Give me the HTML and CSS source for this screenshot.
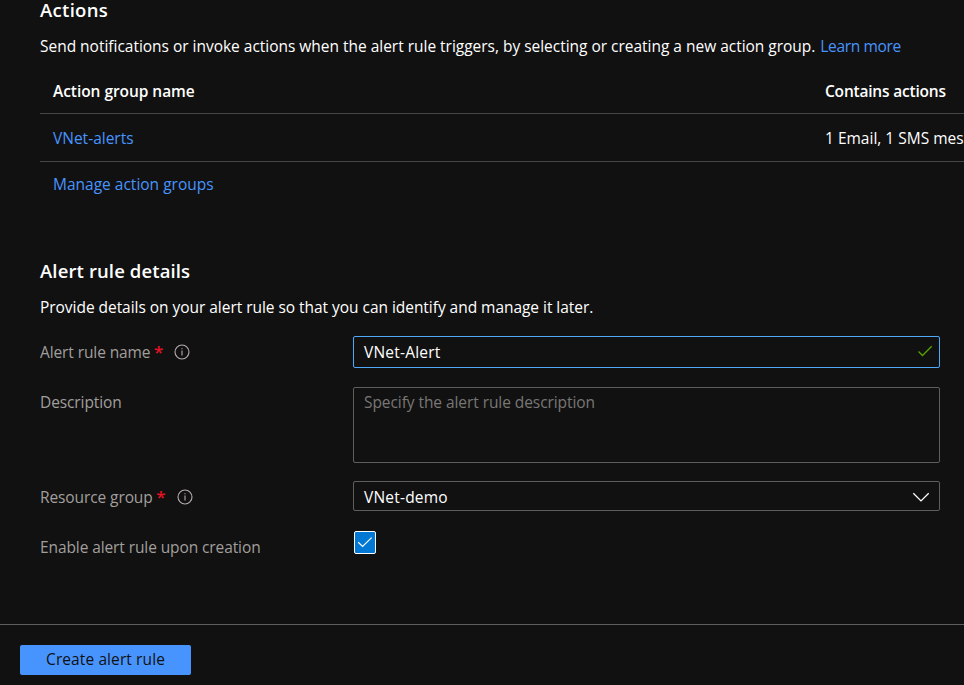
FILE: index.html
```
<!DOCTYPE html>
<html lang="en">
<head>
<meta charset="utf-8">
<title>Create alert rule</title>
<link rel="stylesheet" href="styles.css">
</head>
<body>
<main class="content">
  <section class="actions">
    <h2 class="actions-title">Actions</h2>
    <p class="intro"><span class="intro-text">Send notifications or invoke actions when the alert rule triggers, by selecting or creating a new action group.</span> <a class="link learn" href="#">Learn more</a></p>
    <div class="table">
      <div class="row head"><span class="name">Action group name</span><span class="head-contains">Contains actions</span></div>
      <div class="row"><span class="name"><a class="link" href="#">VNet-alerts</a></span><span>1 Email, 1 SMS message</span></div>
    </div>
    <div class="manage"><a class="link" href="#">Manage action groups</a></div>
  </section>
  <section class="details">
    <h2>Alert rule details</h2>
    <p class="hint">Provide details on your alert rule so that you can identify and manage it later.</p>
    <div class="field field-name">
      <div class="label"><span>Alert rule name</span><span class="required">*</span>
        <svg class="info" width="16" height="16" viewBox="0 0 16 16"><circle cx="8" cy="8" r="7"/><path d="M8 6.5v5M8 4.2v1.1"/></svg>
      </div>
      <div class="input focused"><span class="value">VNet-Alert</span>
        <svg class="valid" width="16" height="12" viewBox="0 0 16 12"><path d="M1.5 6.5 5.5 10.5 14.7 1.3"/></svg>
      </div>
    </div>
    <div class="field field-description">
      <div class="label"><span>Description</span></div>
      <div class="input area"><span class="placeholder">Specify the alert rule description</span></div>
    </div>
    <div class="field field-group">
      <div class="label"><span>Resource group</span><span class="required">*</span>
        <svg class="info" width="16" height="16" viewBox="0 0 16 16"><circle cx="8" cy="8" r="7"/><path d="M8 6.5v5M8 4.2v1.1"/></svg>
      </div>
      <div class="input"><span class="value">VNet-demo</span>
        <svg class="chevron" width="18" height="12" viewBox="0 0 18 12"><path d="M1.3 2.2 9 9.9 16.7 2.2"/></svg>
      </div>
    </div>
    <div class="field field-enable">
      <div class="label"><span>Enable alert rule upon creation</span></div>
      <div class="checkbox"><svg width="16" height="12" viewBox="0 0 16 12"><path d="M1.2 5.2 5.6 9.4 14.6 0.6"/></svg></div>
    </div>
  </section>
</main>
<footer class="footer"><button class="create">Create alert rule</button></footer>
</body>
</html>
```
FILE: styles.css
```
* { box-sizing: border-box; }
body {
  margin: 0;
  height: 685px;
  overflow: hidden;
  display: flex;
  flex-direction: column;
  background: #111;
  color: #fff;
  font: 15.5px/24px "Open Sans", "Noto Sans", sans-serif;
}
h2, p { margin: 0; white-space: nowrap; }
h2 { font-size: 18.5px; font-weight: 650; line-height: 24px; letter-spacing: 0.12px; }
.content { height: 624px; flex: none; padding-left: 40px; }
.link { color: #4894fe; text-decoration: none; }
.actions { padding-top: 0.01px; }
.actions-title { margin-top: -2px; letter-spacing: 0.3px; }
.intro { margin-top: 12px; display: flex; gap: 5px; }
.intro-text { letter-spacing: -0.02px; }
.learn { letter-spacing: -0.35px; }
.table { margin-top: 12px; }
.row {
  display: flex;
  align-items: center;
  height: 48px;
  padding: 1px 0 0 13px;
  border-bottom: 1px solid #484644;
  white-space: nowrap;
}
.row.head { height: 44px; padding: 0 0 2px 13px; font-weight: 650; }
.name { flex: 0 0 772px; }
.row.head .name { letter-spacing: -0.05px; }
.head-contains { letter-spacing: -0.2px; }
.manage { height: 46px; padding: 10px 0 0 13px; }
.details { padding-top: 51px; }
.hint { margin-top: 12px; letter-spacing: -0.04px; }
.field { display: flex; }
.field-name { margin-top: 17px; }
.field-description { margin-top: 19px; }
.field-group { margin-top: 18px; }
.field-enable { margin-top: 18px; }
.label {
  flex: 0 0 313px;
  display: flex;
  align-items: center;
  align-self: flex-start;
  height: 32px;
  color: #a19f9d;
  white-space: nowrap;
  letter-spacing: -0.1px;
}
.field-description .label { height: 30px; }
.required { margin-left: 3.5px; color: #e81123; font-size: 17px; font-weight: 600; }
.info { margin-left: 11px; fill: none; stroke: #b3b0ad; stroke-width: 1.1; }
.field-group .info { margin-left: 12px; }
.input {
  width: 587px;
  height: 30px;
  display: flex;
  align-items: center;
  justify-content: space-between;
  padding: 1px 0 0 10px;
  border: 1px solid #605e5c;
  border-radius: 2px;
}
.input svg { fill: none; stroke-width: 1.3; }
.input.focused { height: 32px; padding-top: 0; border-color: #4eaaf8; }
.value { letter-spacing: 0.2px; }
.valid { stroke: #57a300; margin-right: 6px; margin-bottom: 2px; }
.input .chevron { stroke: #fff; margin-right: 9px; }
.area { height: 76px; align-items: flex-start; padding-top: 2px; color: #797775; }
.placeholder { letter-spacing: -0.07px; }
.checkbox {
  margin-left: 1px;
  width: 22px;
  height: 23px;
  display: flex;
  align-items: center;
  justify-content: center;
  background: #0078d4;
  border: 1px solid #fff;
  border-radius: 2px;
}
.checkbox svg { fill: none; stroke: #fff; stroke-width: 1.2; }
.footer { height: 61px; flex: none; border-top: 1px solid #605e5c; padding: 20px 0 0 20px; }
.create {
  width: 171px;
  height: 30px;
  padding: 0 0 2px;
  border: 0;
  border-radius: 2px;
  background: #4894fe;
  color: #111;
  font: inherit;
  letter-spacing: 0.1px;
}
```
